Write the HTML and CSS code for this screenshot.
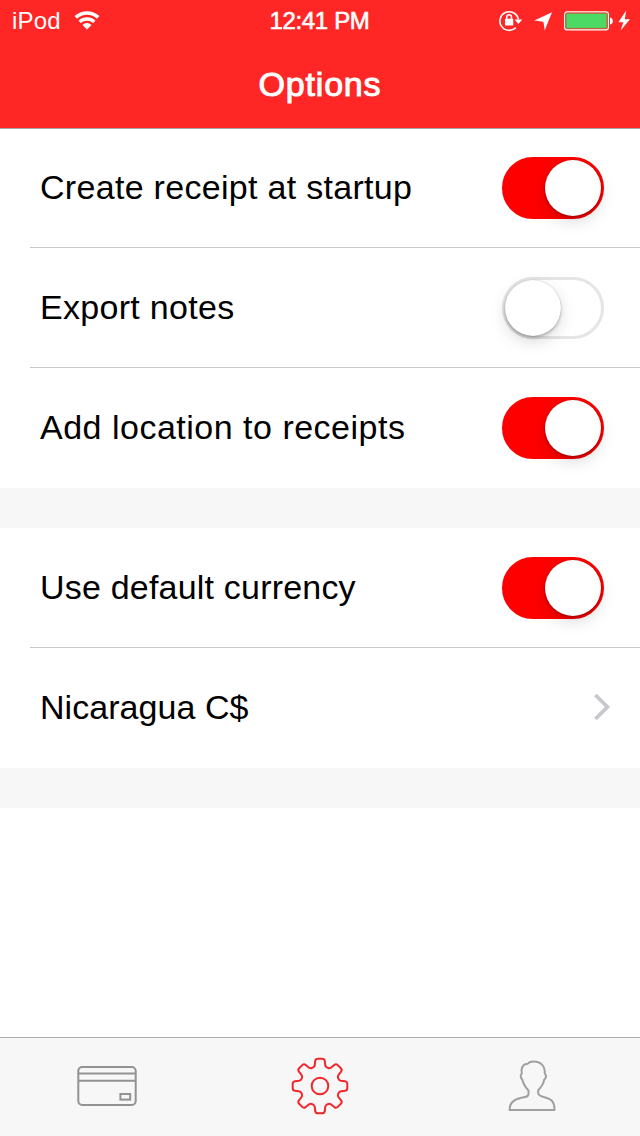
FILE: index.html
```html
<!DOCTYPE html>
<html lang="en">
  <head>
    <meta charset="utf-8">
    <title>Options</title>
    <link rel="stylesheet" href="styles.css">
  </head>
  <body>
    <div class="header">
      <div class="status">
        <div class="status-left">
          <span class="carrier">iPod</span>
          <svg width="26" height="20" viewBox="0 0 26 20" fill="none" stroke="#fff">
            <path d="M1.8 6.4 A16.5 16.5 0 0 1 24.2 6.4" stroke-width="3.6" />
            <path d="M5.7 10.9 A10.7 10.7 0 0 1 20.3 10.9" stroke-width="3.3" />
            <path d="M13 18.6 L8.5 14 A6 6 0 0 1 17.5 14 Z" fill="#fff" stroke="none" />
          </svg>
        </div>
        <span class="time">12:41 PM</span>
        <div class="status-right">
          <!-- rotation lock, location, battery, charging -->
          <svg width="136" height="24" viewBox="0 0 136 24">
            <path d="M15.8 17.6 A9.3 9.3 0 1 1 18.4 9.6" fill="none" stroke="#fff" stroke-width="1.6" />
            <path d="M14.6 9.6 h7.6 l-3.8 4.4 z" fill="#fff" />
            <rect x="5" y="8.8" width="8.2" height="6.8" rx="0.6" fill="#fff" />
            <path d="M6.7 9 V7.2 a2.4 2.4 0 0 1 4.8 0 V9" fill="none" stroke="#fff" stroke-width="1.5" />
            <path d="M52 2.2 L44.7 20.4 L43.4 11.8 L34.3 10.6 Z" fill="#fff" />
            <rect x="64.6" y="1.8" width="43.8" height="18" rx="2.6" fill="none" stroke="#fff" stroke-width="1.2" />
            <rect x="66" y="3.2" width="41" height="15.2" rx="1.2" fill="#4cd964" stroke="#c45a35" stroke-width="0.8" />
            <path d="M110 7.4 c3.8 0.4 3.8 6.6 0 7 z" fill="#fff" />
            <path d="M126.2 0.6 L118.4 12.2 H123.4 L120.6 20.6 L130 9.2 H124.8 Z" fill="#fff" />
          </svg>
        </div>
      </div>
      <div class="title">Options</div>
    </div>

    <div class="list">
      <div class="section">
        <div class="row line">
          <label>Create receipt at startup</label>
          <div class="switch on"><div class="knob"></div></div>
        </div>
        <div class="row line">
          <label>Export notes</label>
          <div class="switch"><div class="knob"></div></div>
        </div>
        <div class="row">
          <label class="wide">Add location to receipts</label>
          <div class="switch on"><div class="knob"></div></div>
        </div>
      </div>
      <div class="section">
        <div class="row line">
          <label class="narrow">Use default currency</label>
          <div class="switch on"><div class="knob"></div></div>
        </div>
        <div class="row">
          <label class="normal">Nicaragua C$</label>
          <svg class="arrow" width="18" height="28" viewBox="0 0 18 28">
            <path d="M2.4 2 L14.4 14 L2.4 26" fill="none" stroke="#c7c7cc" stroke-width="3.8" />
          </svg>
        </div>
      </div>
    </div>

    <div class="tabs">
      <div class="tab">
        <svg width="60" height="60" viewBox="77 1056 60 60" fill="none" stroke="#929292" stroke-width="2">
          <rect x="78.3" y="1067" width="57.4" height="38" rx="4" />
          <path d="M78.3 1073.6 H135.7 M78.3 1080.8 H135.7" />
          <rect x="120.4" y="1094" width="9.8" height="5.6" />
        </svg>
      </div>
      <div class="tab">
        <svg width="60" height="60" viewBox="-30 -30 60 60" fill="none" stroke="#f3262b" stroke-width="2">
          <circle r="8.3" />
          <path id="gear" />
        </svg>
      </div>
      <div class="tab">
        <svg width="60" height="60" viewBox="503 1056 60 60" fill="none" stroke="#a0a0a0" stroke-width="2" stroke-linejoin="round">
          <path d="M509.5 1110 H554.5 C554.5 1100 549.5 1098.5 544.5 1097.3 C540.5 1096.3 538.2 1095.3 538.2 1093 V1090.3 C541.5 1087 543.6 1083.2 544.2 1079.7 C546.2 1077.8 546.5 1075.4 544.8 1073.6 C545.2 1066.2 541.2 1061.6 533.5 1061.6 C530.5 1061.6 529 1062.3 527.8 1063.7 C523.5 1063.8 520.7 1067 521.8 1073.6 C520.1 1075.2 520.5 1078 522.4 1079.7 C523.2 1083.6 525.5 1087.2 528.5 1090.5 V1094 C528.5 1097 525.5 1097 520.5 1098 C513.5 1099.5 509.5 1102.5 509.5 1110 Z" />
        </svg>
      </div>
    </div>
    <script src="gear.js"></script>
  </body>
</html>
```
FILE: styles.css
```css
html {
  font-family: "Liberation Sans", Arial, sans-serif;
}

body {
  display: flex;
  flex-flow: column;
  margin: 0;
  width: 640px;
  height: 1136px;
  overflow: hidden;
  background: #fff;
}

svg {
  display: block;
  overflow: visible;
}

.header {
  position: relative;
  flex: none;
  height: 128px;
  background: #ff2626;
  box-shadow: 0 1px 0 #a6a6a6;
  color: #fff;
}

.status {
  display: grid;
  grid-template-columns: 1fr auto 1fr;
  align-items: center;
  height: 40px;
  padding: 0 4px 0 12px;
  font-size: 24px;
}

.status-left {
  display: flex;
  align-items: center;
  gap: 13px;
}

.carrier {
  line-height: 42px;
  letter-spacing: 0.2px;
}

.time {
  padding-right: 9px;
  line-height: 42px;
  letter-spacing: -0.35px;
  -webkit-text-stroke: 0.6px #fff;
}

.status-right {
  display: flex;
  justify-content: flex-end;
  padding-top: 2px;
}

.title {
  line-height: 88px;
  font-size: 34px;
  text-align: center;
  letter-spacing: 0.8px;
  -webkit-text-stroke: 1px #fff;
}

.list {
  flex: 1;
}

.section {
  border-bottom: 40px solid #f7f7f7;
}

.row {
  display: flex;
  align-items: center;
  justify-content: space-between;
  box-sizing: border-box;
  height: 120px;
  margin-left: 30px;
  padding: 0 36px 0 10px;
  border-bottom: 1px solid transparent;
}

.line {
  border-color: #c8c7cc;
}

label {
  font-size: 34px;
  letter-spacing: 0.3px;
}

.wide {
  letter-spacing: 0.5px;
}

.narrow {
  letter-spacing: 0.2px;
}

.normal {
  letter-spacing: 0.05px;
}

.switch {
  box-sizing: border-box;
  width: 102px;
  height: 62px;
  border: 3px solid #e5e5e5;
  border-radius: 31px;
}

.knob {
  width: 56px;
  height: 56px;
  border-radius: 50%;
  background: #fff;
  box-shadow: 0 0 1px rgba(0, 0, 0, 0.3), 0 2px 3px rgba(0, 0, 0, 0.22), 0 6px 16px rgba(0, 0, 0, 0.14);
}

.on {
  border-color: #f00;
  background: #f00;
}

.on .knob {
  margin-left: auto;
}

.arrow {
  margin-right: -7px;
  margin-bottom: 2px;
}

.tabs {
  display: flex;
  flex: none;
  box-sizing: border-box;
  height: 99px;
  padding-bottom: 2px;
  border-top: 1px solid #acacac;
  background: #f7f7f7;
}

.tab {
  display: flex;
  flex: 1;
  align-items: center;
  justify-content: center;
}
```
FILE: gear.js
```js
// eight rounded teeth around the centre, each one the same curve turned by 45 degrees
function point(x, y, angle) {
  const px = x * Math.cos(angle) - y * Math.sin(angle);
  const py = x * Math.sin(angle) + y * Math.cos(angle);
  return px.toFixed(2) + " " + py.toFixed(2);
}

let path = "";
for (let i = 0; i < 8; i++) {
  const a = (i * Math.PI) / 4;
  const p = (x, y) => point(x, y, a);
  path += (i === 0 ? "M" : "L") + p(-6.9, -18.6);
  path += "Q" + p(-5.5, -19.2) + " " + p(-5.2, -21);
  path += "L" + p(-4.8, -25) + "Q" + p(-4.4, -27.3) + " " + p(-2.2, -27.3);
  path += "L" + p(2.2, -27.3) + "Q" + p(4.4, -27.3) + " " + p(4.8, -25);
  path += "L" + p(5.2, -21) + "Q" + p(5.5, -19.2) + " " + p(6.9, -18.6);
}
document.getElementById("gear").setAttribute("d", path + "Z");
```
